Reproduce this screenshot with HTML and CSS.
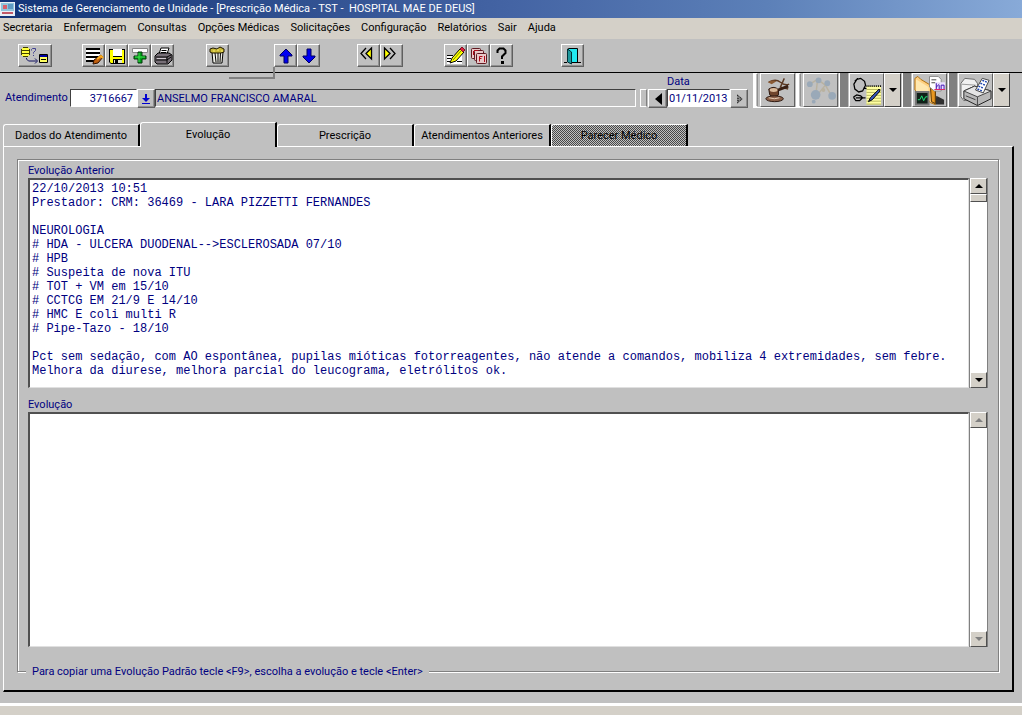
FILE: index.html
```
<!DOCTYPE html>
<html lang="pt-BR">
<head>
<meta charset="utf-8">
<title>Sistema de Gerenciamento de Unidade</title>
<link rel="stylesheet" href="styles.css">
</head>
<body>
<header class="titlebar">
  <svg class="app-icon" width="16" height="16" viewBox="0 0 16 16"><rect x="0" y="1" width="15" height="14" fill="#e8eef6"/><rect x="1" y="2" width="13" height="8" fill="#8fc4dc"/><rect x="3" y="4" width="4" height="4" fill="#d8606c"/><rect x="8" y="3" width="5" height="5" fill="#5f9cc4"/><path d="M2 12h11" stroke="#c05868" stroke-width="2"/></svg>
  <span>Sistema de Gerenciamento de Unidade - [Prescrição Médica - TST -&nbsp; HOSPITAL MAE DE DEUS]</span>
</header>
<nav class="menubar">
  <button>Secretaria</button><button>Enfermagem</button><button>Consultas</button><button>Opções Médicas</button><button>Solicitações</button><button>Configuração</button><button>Relatórios</button><button>Sair</button><button>Ajuda</button>
</nav>
<div class="toolbar">
  <div class="group">
    <button class="tool wide" aria-label="Consultar"><svg width="30" height="19" viewBox="0 0 30 19"><path d="M2 2h7v8H2z" fill="#ffff40"/><path d="M3 1.500h5M1.500 3v6M9.500 3v6M3 10.500h5M2 4.500h7M2 7.500h7" stroke="#404000" fill="none"/><path d="M11.500 4.500V3.500l1-1h3v2l-2 2v1M13 9.500h1" stroke="#404090" fill="none"/><path d="M6.500 12v1l2 2h8M15 12.500l2.500 2.500-2.500 2.500" stroke="#101060" fill="none"/><path d="M19.500 8.500h8v8h-8z" fill="#ffff60" stroke="#000"/><path d="M20 9h7v2h-7z" fill="#0000a0"/><path d="M21 13.500h5" stroke="#000"/></svg></button>
  </div>
  <div class="group g1">
    <button class="tool" aria-label="Editar"><svg width="20" height="20" viewBox="0 0 20 20"><path d="M2 2h14v13H2z" fill="#fff"/><path d="M2 3h14M2 7h14M2 11h12M2 15h8" stroke="#000" stroke-width="2"/><path d="M9 18l1-4 7-5 2 2-5 6z" fill="#c06010" stroke="#301000"/><path d="M13 13l4-3 2 2" stroke="#ffb020" stroke-width="2" fill="none"/></svg></button>
    <button class="tool" aria-label="Salvar"><svg width="20" height="20" viewBox="0 0 20 20"><path d="M2 3h16v15H4l-2-2z" fill="#000"/><path d="M3 4h3v7h9V4h2v13h-2v-4H6v4H4l-1-1z" fill="#ff0"/><path d="M6 3h9v7H6z" fill="#fff"/><path d="M7 14h8v3H7z" fill="#e8e8d0"/><path d="M8 14h3v3H8z" fill="#000"/></svg></button>
    <button class="tool" aria-label="Inserir"><svg width="20" height="20" viewBox="0 0 20 20"><path d="M2.500 2.500h15v4h-15z" fill="#fff" stroke="#888"/><path d="M8 6h4v4h4v3h-4v4H8v-4H4v-3h4z" fill="#00a018" stroke="#003808"/><path d="M9 7v9M5 11h10" stroke="#40e050"/></svg></button>
    <button class="tool" aria-label="Imprimir"><svg width="20" height="20" viewBox="0 0 20 20"><path d="M6 8l2-6h8l-2 6z" fill="#fff" stroke="#000"/><path d="M8.500 4.500h5M8 6.500h5" stroke="#000"/><path d="M2 10l3-3h11l3 2v5l-4 4H4l-2-2z" fill="#787078" stroke="#000"/><path d="M3 11h11l4-2M3 14h11l4-3M14 11v6" stroke="#000" fill="none"/><path d="M4 12.500h9" stroke="#d0c8d0"/></svg></button>
  </div>
  <div class="group g2">
    <button class="tool" aria-label="Excluir"><svg width="20" height="20" viewBox="0 0 20 20"><path d="M4 6h11l-1 11H5z" fill="#f0f0e8" stroke="#000"/><path d="M7 7l1 9M10 7v9M12.500 7l-.5 9" stroke="#000"/><path d="M2 3l3-1 4 1 3-2 4 2v3l-3 1H4L2 6z" fill="#c8b838" stroke="#201800"/><path d="M5 5h2M9 4h2M13 5h2" stroke="#fff070"/></svg></button>
  </div>
  <div class="group g3">
    <button class="tool" aria-label="Acima"><svg width="20" height="20" viewBox="0 0 20 20"><path d="M10 3l6 6v1h-4v7H8v-7H4V9z" fill="#0000f0" stroke="#000060"/></svg></button>
    <button class="tool" aria-label="Abaixo"><svg width="20" height="20" viewBox="0 0 20 20"><path d="M10 17l6-6v-1h-4V3H8v7H4v1z" fill="#0000f0" stroke="#000060"/></svg></button>
  </div>
  <div class="group g4">
    <button class="tool" aria-label="Anterior"><svg width="20" height="20" viewBox="0 0 20 20"><path d="M12 3v9L7 7.500z" fill="#ff0"/><path d="M7 2L2 7.500 7 13M12.500 2L7 7.500l5.500 5.500z" stroke="#000" stroke-width="1.300" fill="none"/></svg></button>
    <button class="tool" aria-label="Próximo"><svg width="20" height="20" viewBox="0 0 20 20"><path d="M3 3v9l5-4.500z" fill="#ff0"/><path d="M8 2l5 5.500L8 13M2.500 2L8 7.500 2.500 13z" stroke="#000" stroke-width="1.300" fill="none"/></svg></button>
  </div>
  <div class="group g5">
    <button class="tool" aria-label="Prescrever"><svg width="20" height="20" viewBox="0 0 20 20"><path d="M1 9h15v9H1z" fill="#fff"/><path d="M1 9.500h6M1 12.500h4M1 15.500h3M11 15.500h5" stroke="#000"/><path d="M4 17l2-5 8-9 4 3-8 9z" fill="#ff0" stroke="#000"/><path d="M7 14l8-9" stroke="#709000"/><path d="M14 3l2-2 3 3-2 2z" fill="#e02040" stroke="#801020"/></svg></button>
    <button class="tool" aria-label="Copiar"><svg width="20" height="20" viewBox="0 0 20 20"><g fill="#e8c8c8" stroke="#601820"><rect x="2.500" y="2.500" width="9" height="10" rx="1"/><rect x="5.500" y="4.500" width="9" height="10" rx="1"/><rect x="7.500" y="7.500" width="10" height="10" rx="1"/></g><path d="M10.500 15.500v-5h3M10.500 12.500h2M15.500 10v6M5 4.500h4M4.500 5v4" stroke="#b00818" fill="none"/></svg></button>
    <button class="tool" aria-label="Ajuda"><svg width="20" height="20" viewBox="0 0 20 20"><path d="M5.500 7V4.500l2-2h4l2 2V7L10 10.500V13" fill="none" stroke="#000" stroke-width="2"/><path d="M9 15h3v3H9z"/></svg></button>
  </div>
  <div class="group g6">
    <button class="tool" aria-label="Sair"><svg width="20" height="20" viewBox="0 0 20 20"><path d="M5.500 2.500h9v14h-9z" fill="#20e8f0" stroke="#000"/><path d="M4.500 3l4 3v12l-4-2z" fill="#20989c" stroke="#003038"/><path d="M1 16.500h3M14 16.500h4" stroke="#000"/></svg></button>
  </div>
  <span class="popup-edge"></span>
</div>
<main>
  <form class="patient">
    <label class="lab" for="atend">Atendimento</label>
    <input id="atend" class="field num" value="3716667">
    <button type="button" class="mini" aria-label="Lista de pacientes"><svg width="12" height="12" viewBox="0 0 12 12"><path d="M5 1h2v4h3L6 9 2 5h3zM2 10h8v1H2z" fill="#0000d0"/></svg></button>
    <input class="field name" aria-label="Paciente" value="ANSELMO FRANCISCO AMARAL" readonly>
    <span class="sep"></span>
    <button type="button" class="mini prev" aria-label="Dia anterior"><svg width="12" height="14" viewBox="0 0 12 14"><path d="M10 1v12L3 7z" fill="#000"/></svg></button>
    <div class="date"><label for="data">Data</label><input id="data" class="field" value="01/11/2013"></div>
    <button type="button" class="mini next" aria-label="Próximo dia"><svg width="12" height="12" viewBox="0 0 12 12"><path d="M4 1l6 5-6 5z" fill="#888"/><path d="M4 2l5 4-5 4M5 5v3" fill="none" stroke="#000" stroke-dasharray="1 1"/></svg></button>
    <div class="shortcuts">
      <span class="rail"></span>
      <button type="button" class="big" aria-label="Parecer"><svg width="33" height="33" viewBox="0 0 34 33"><path d="M8 8q7-4 12 0t9 2M24 4l-4 9 8 2" fill="none" stroke="#5c3a24" stroke-width="1.500"/><path d="M7 8q4-3 9-1l-5 3z" fill="#8a5a34"/><path d="M15 17l13-5" stroke="#3a2014" stroke-width="3"/><path d="M8 15q6-4 10 1v5q-5 4-9 0z" fill="#70452c" stroke="#2c1810"/><ellipse cx="13" cy="16" rx="4" ry="2" fill="#d8b898"/><ellipse cx="14" cy="25" rx="9" ry="3" fill="#8b6048" stroke="#2c1810"/><path d="M8 24q6 2 11 0" stroke="#e8d0b8" fill="none"/></svg></button>
      <span class="rail"></span>
      <button type="button" class="big" aria-label="Exames" disabled><svg width="33" height="33" viewBox="0 0 34 33"><path d="M6 10l8-5 8 6-9 11M22 11l7 12M14 5l-2 18" fill="none" stroke="#b9b2a0" stroke-width="1.500"/><g fill="#9aa9b8"><circle cx="6" cy="10" r="3"/><circle cx="15" cy="6" r="3"/><circle cx="24" cy="9" r="3"/><circle cx="12" cy="21" r="5"/><circle cx="29" cy="22" r="4"/><circle cx="10" cy="28" r="2"/></g><circle cx="20" cy="16" r="2" fill="#b9b2a0"/></svg></button>
      <span class="rail dark"></span>
      <button type="button" class="big" aria-label="Evolução médica"><svg width="33" height="33" viewBox="0 0 34 33"><path d="M7 5l4-1 4 3 1 4-3 6-4 1-4-3-1-5zM5 7l3-3M14 14l7 1 1 3M4 23l3-2 4 1 2 2-3 3H6l-2-3zM6 24h10" fill="none" stroke="#000" stroke-width="1.300"/><path d="M17 12h15v19H17z" fill="#ffffa0"/><path d="M17 15.500h15M17 18.500h15M17 21.500h15M17 24.500h15M17 27.500h15M17 30.500h15" stroke="#b8b860"/><path d="M17 12h15" stroke="#000" stroke-width="2" stroke-dasharray="1 1"/><path d="M19 28l2-4 9-9 1 2-8 9z" fill="#3858c0" stroke="#000"/></svg></button>
      <button type="button" class="drop" aria-label="Mais evoluções"><i></i></button>
      <span class="rail dark"></span>
      <button type="button" class="big" aria-label="Prontuário"><svg width="33" height="33" viewBox="0 0 34 33"><path d="M24 22l8 4v5h-9z" fill="#303030"/><path d="M2 4l3-2 3 3 15 9v17l-5-2L2 16z" fill="#ffd080" stroke="#b07010"/><path d="M3 5l13 8v14L3 20z" fill="#ffe8b0"/><path d="M18 13l5 1v16l-4-2z" fill="#e89820" stroke="#503000"/><path d="M17 2h9l3 3v12h-7l-5-4z" fill="#fff" stroke="#888"/><path d="M19 5.500h5M19 8.500h4" stroke="#444"/><path d="M23 8h10v8H23z" fill="#e8e0ff"/><path d="M24 15V9M24 13l3-3M27 15v-4M29 15v-4h3v4" stroke="#4010b0" fill="none"/><path d="M22 15.500h11" stroke="#e02060"/><path d="M3 18h13v13H3z" fill="#102018" stroke="#777" stroke-width="2"/><path d="M5 26h2l2-4 2 5 2-4h2" stroke="#20e878" fill="none"/></svg></button>
      <span class="rail dark"></span>
      <button type="button" class="big" aria-label="Imprimir prescrição"><svg width="33" height="33" viewBox="0 0 34 33"><path d="M2 9l4-5 10 1 3 4v15l-14 3-3-4z" fill="#f0f0f0" stroke="#666"/><path d="M3 10l14 1" stroke="#999"/><path d="M5 17l11-5 17 5v8l-14 7-14-7z" fill="#b8b8b8" stroke="#222"/><path d="M5 17l14 6 14-6-17-5z" fill="#e4e4e4" stroke="#444"/><path d="M19 23v9M7 22l10 4" stroke="#444"/><path d="M17 16l7-12 7 2-6 13z" fill="#fff" stroke="#444"/><path d="M22 9l5 2M24 6l5 2M20 12l5 2M19 15l5 2" stroke="#2048b0" stroke-width="1.500" stroke-dasharray="2 1"/></svg></button>
      <button type="button" class="drop" aria-label="Mais impressões"><i></i></button>
    </div>
  </form>
  <div class="tabs" role="tablist">
    <button role="tab">Dados do Atendimento</button><button role="tab" class="active" aria-selected="true">Evolução</button><button role="tab">Prescrição</button><button role="tab">Atendimentos Anteriores</button><button role="tab" disabled>Parecer Médico</button>
  </div>
  <section class="panel">
    <div class="frame">
      <label for="anterior">Evolução Anterior</label>
      <div class="box first">
        <textarea id="anterior" readonly>22/10/2013 10:51
Prestador: CRM: 36469 - LARA PIZZETTI FERNANDES

NEUROLOGIA
# HDA - ULCERA DUODENAL--&gt;ESCLEROSADA 07/10
# HPB
# Suspeita de nova ITU
# TOT + VM em 15/10
# CCTCG EM 21/9 E 14/10
# HMC E coli multi R
# Pipe-Tazo - 18/10

Pct sem sedação, com AO espontânea, pupilas mióticas fotorreagentes, não atende a comandos, mobiliza 4 extremidades, sem febre.
Melhora da diurese, melhora parcial do leucograma, eletrólitos ok.</textarea>
        <div class="scroll"><button aria-label="Rolar para cima"><i class="up"></i></button><span class="thumb"></span><button class="end" aria-label="Rolar para baixo"><i></i></button></div>
      </div>
      <label for="evolucao" class="second-label">Evolução</label>
      <div class="box second">
        <textarea id="evolucao"></textarea>
        <div class="scroll"><button disabled aria-label="Rolar para cima"><i class="up"></i></button><button disabled class="end" aria-label="Rolar para baixo"><i></i></button></div>
      </div>
      <p class="hint">Para copiar uma Evolução Padrão tecle &lt;F9&gt;, escolha a evolução e tecle &lt;Enter&gt;</p>
    </div>
  </section>
</main>
<footer class="status"></footer>
</body>
</html>
```
FILE: styles.css
```
* { box-sizing: border-box; }
body {
  margin: 0;
  min-height: 100vh;
  display: flex;
  flex-direction: column;
  background: #c0c0c0;
  color: #000080;
  font: 11px/14px Roboto, "Liberation Sans", Arial, sans-serif;
}
button, input, textarea { font: inherit; color: inherit; margin: 0; padding: 0; border-radius: 0; }
button { border: 0; background: #c0c0c0; }
svg { display: block; }

.titlebar {
  height: 18px;
  display: flex;
  align-items: center;
  gap: 2px;
  background: linear-gradient(90deg, #123478, #2c4c8c 25%, #4464a4 50%, #5c80b8 75%, #88aad8);
  color: #fff;
  white-space: nowrap;
}
.menubar {
  height: 21px;
  display: flex;
  align-items: center;
  gap: 11px;
  padding: 0 3px 1px;
  background: #d4d0c8;
}
.menubar button { background: none; color: #000; white-space: nowrap; }

.toolbar {
  position: relative;
  height: 34px;
  display: flex;
  padding: 5px 18px 0;
  border-bottom: 1px solid #000;
}
.group { display: flex; }
.g1 { margin-left: 30px; }
.g2 { margin-left: 32px; }
.g3 { margin-left: 45px; }
.g4 { margin-left: 37px; }
.g5 { margin-left: 41px; }
.g6 { margin-left: 48px; }
.tool, .mini {
  display: grid;
  place-items: center;
  width: 23px;
  height: 23px;
  border: 1px solid;
  border-color: #fff #606060 #606060 #fff;
  box-shadow: inset -1px -1px #909090;
}
.tool.wide { width: 34px; }
.popup-edge {
  position: absolute;
  left: 229px;
  top: 28px;
  width: 46px;
  height: 12px;
  border: solid #808080;
  border-width: 0 2px 2px 0;
}

main { flex: 1; display: flex; flex-direction: column; padding: 0 8px 11px 3px; }
.patient { display: flex; align-items: flex-start; height: 49px; padding-right: 4px; }
.lab { margin: 18px 0 0 2px; width: 65px; }
.field {
  height: 18px;
  margin-top: 16px;
  border: 1px solid;
  border-color: #404040 #fff #fff #404040;
  background: #fff;
  outline: 0;
}
.num { width: 67px; text-align: right; padding-right: 3px; }
.name { flex: 1; min-width: 0; background: #c0c0c0; padding-left: 1px; }
.mini { width: 18px; height: 19px; margin-top: 16px; flex: none; }
.sep { width: 7px; height: 18px; margin: 16px 1px 0 4px; border: 1px solid #fff; border-right-color: #808080; }
.prev { width: 19px; }
.date { width: 63px; display: flex; flex-direction: column; padding-top: 2px; }
.date .field { margin: 0; width: 63px; padding: 0 1px; }
.shortcuts { display: flex; height: 35px; margin-left: 5px; border-bottom: 1px solid #fff; }
.rail { width: 5px; margin-right: 2px; border: 1px solid #fff; border-left-width: 3px; border-right-color: #909090; }
.rail.dark { width: 9px; margin: 0 1px; border: 0; background: #808080; border-left: 1px solid #fff; }
.big { width: 35px; border: 1px solid; border-color: #fff #606060 #606060 #fff; }
.big + .rail { margin-left: 1px; }
.drop { width: 17px; background: #d4d0c8; border: 1px solid; border-color: #fff #404040 #404040 #fff; display: grid; place-items: center; }
i { display: block; border: solid transparent; border-width: 4px 4px 0; border-top-color: #000; }
i.up { border-width: 0 4px 4px; border-bottom-color: #000; }

.tabs { display: flex; align-items: flex-end; height: 24px; }
.tabs button {
  width: 137px;
  height: 22px;
  color: #000;
  white-space: nowrap;
  border: solid;
  border-width: 1px 2px 0 1px;
  border-color: #fff #000 #fff #fff;
  border-top-left-radius: 3px;
}
.tabs .active { position: relative; height: 25px; margin-bottom: -1px; }
.tabs button:disabled { background: repeating-conic-gradient(#484848 0 25%, #c0c0c0 0 50%) 0 0 / 2px 2px; }
.panel {
  flex: 1;
  display: flex;
  padding: 12px 13px 18px;
  border: solid;
  border-width: 1px 2px 2px 1px;
  border-color: #fff #000 #000 #fff;
}
.frame {
  position: relative;
  flex: 1;
  display: flex;
  flex-direction: column;
  padding: 4px 10px 24px;
  border: 1px solid #808080;
  box-shadow: 1px 1px #fff, inset 1px 1px #fff;
}
.second-label { margin-top: 10px; }
.box { display: flex; min-height: 0; }
.first { flex: 210 0 0; }
.second { flex: 235 0 0; }
textarea {
  flex: 1;
  min-width: 0;
  resize: none;
  overflow: hidden;
  white-space: pre;
  padding: 2px;
  border: solid;
  border-width: 2px 1px 1px 2px;
  border-color: #505050 #e0e0e0 #e0e0e0 #505050;
  background: #fff;
  outline: 0;
  font: 12px/14px "Liberation Mono", "Courier New", monospace;
}
.scroll { width: 19px; display: flex; flex-direction: column; background: #fff; border: 1px solid #808080; border-width: 0 1px; }
.scroll button, .thumb {
  height: 16px;
  background: #d4d0c8;
  border: 1px solid;
  border-color: #fff #505050 #505050 #fff;
  display: grid;
  place-items: center;
}
.thumb { height: 8px; }
.scroll .end { margin-top: auto; }
.scroll button:disabled i { border-top-color: #808080; }
.scroll button:disabled i.up { border-top-color: transparent; border-bottom-color: #808080; }
.hint { position: absolute; left: 8px; bottom: -8px; margin: 0; padding: 0 6px; background: #c0c0c0; }
.status { height: 12px; border-top: 3px solid #fff; background: #d4d0c8; }
```
